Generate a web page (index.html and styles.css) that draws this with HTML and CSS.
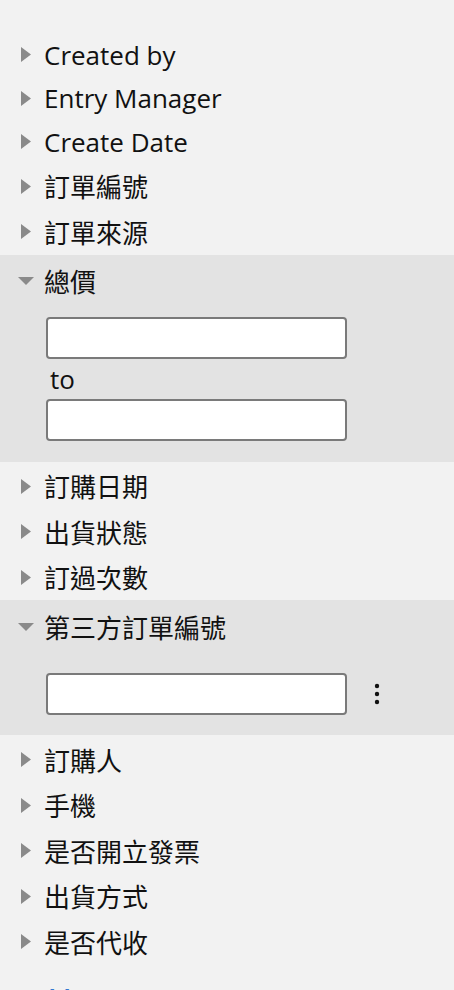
FILE: index.html
```html
<!DOCTYPE html>
<html lang="en">

<head>
    <meta charset="UTF-8">
    <meta name="viewport" content="width=device-width, initial-scale=1.0">
    <title>Filters</title>
    <link rel="stylesheet" href="styles.css">
</head>

<body>
    <div class="filters">
        <div class="row"><span class="marker"><svg class="arrow-right" width="10" height="15" viewBox="0 0 10 15"><path d="M0 0 L10 7.5 L0 15 Z" /></svg></span>Created by</div>
        <div class="row"><span class="marker"><svg class="arrow-right" width="10" height="15" viewBox="0 0 10 15"><path d="M0 0 L10 7.5 L0 15 Z" /></svg></span>Entry Manager</div>
        <div class="row"><span class="marker"><svg class="arrow-right" width="10" height="15" viewBox="0 0 10 15"><path d="M0 0 L10 7.5 L0 15 Z" /></svg></span>Create Date</div>
        <div class="row"><span class="marker"><svg class="arrow-right" width="10" height="15" viewBox="0 0 10 15"><path d="M0 0 L10 7.5 L0 15 Z" /></svg></span>訂單編號</div>
        <div class="row"><span class="marker"><svg class="arrow-right" width="10" height="15" viewBox="0 0 10 15"><path d="M0 0 L10 7.5 L0 15 Z" /></svg></span>訂單來源</div>

        <div class="group">
            <div class="row"><span class="marker open"><svg class="arrow-down" width="16" height="8" viewBox="0 0 16 8"><path d="M0 0 L16 0 L8 8 Z" /></svg></span>總價</div>
            <div class="range">
                <input class="field" type="text">
                <div class="to">to</div>
                <input class="field" type="text">
            </div>
        </div>

        <div class="row"><span class="marker"><svg class="arrow-right" width="10" height="15" viewBox="0 0 10 15"><path d="M0 0 L10 7.5 L0 15 Z" /></svg></span>訂購日期</div>
        <div class="row"><span class="marker"><svg class="arrow-right" width="10" height="15" viewBox="0 0 10 15"><path d="M0 0 L10 7.5 L0 15 Z" /></svg></span>出貨狀態</div>
        <div class="row"><span class="marker"><svg class="arrow-right" width="10" height="15" viewBox="0 0 10 15"><path d="M0 0 L10 7.5 L0 15 Z" /></svg></span>訂過次數</div>

        <div class="group">
            <div class="row"><span class="marker open"><svg class="arrow-down" width="16" height="8" viewBox="0 0 16 8"><path d="M0 0 L16 0 L8 8 Z" /></svg></span>第三方訂單編號</div>
            <div class="single">
                <input class="field" type="text">
                <svg class="kebab" width="6" height="22" viewBox="0 0 6 22">
                    <circle cx="3" cy="3" r="2.2" />
                    <circle cx="3" cy="11" r="2.2" />
                    <circle cx="3" cy="19" r="2.2" />
                </svg>
            </div>
        </div>

        <div class="row"><span class="marker"><svg class="arrow-right" width="10" height="15" viewBox="0 0 10 15"><path d="M0 0 L10 7.5 L0 15 Z" /></svg></span>訂購人</div>
        <div class="row"><span class="marker"><svg class="arrow-right" width="10" height="15" viewBox="0 0 10 15"><path d="M0 0 L10 7.5 L0 15 Z" /></svg></span>手機</div>
        <div class="row"><span class="marker"><svg class="arrow-right" width="10" height="15" viewBox="0 0 10 15"><path d="M0 0 L10 7.5 L0 15 Z" /></svg></span>是否開立發票</div>
        <div class="row"><span class="marker"><svg class="arrow-right" width="10" height="15" viewBox="0 0 10 15"><path d="M0 0 L10 7.5 L0 15 Z" /></svg></span>出貨方式</div>
        <div class="row"><span class="marker"><svg class="arrow-right" width="10" height="15" viewBox="0 0 10 15"><path d="M0 0 L10 7.5 L0 15 Z" /></svg></span>是否代收</div>

        <a class="more" href="#">More...</a>
    </div>
</body>

</html>
```

FILE: styles.css
```css
body {
    font-family: "Open Sans", "Noto Sans CJK TC", sans-serif;
    font-size: 26px;
    color: #111;
    background-color: #f2f2f2;
    margin: 0;
    padding: 0;
}

.filters {
    padding-top: 33px;
}

.row {
    display: flex;
    align-items: center;
    padding: 3.5px 0 4px 0;
}

.marker {
    width: 44px;
    padding-left: 21px;
    box-sizing: border-box;
    display: flex;
    align-items: center;
}

.marker.open {
    padding-left: 18px;
}

.marker svg {
    fill: #8a8a8a;
}

.group {
    background-color: #e3e3e3;
    padding: 4px 0 20.5px 0;
    margin-bottom: 2px;
}

.range {
    padding: 13px 0 0 46px;
}

.single {
    display: flex;
    align-items: center;
    padding: 23px 0 0 46px;
}

.field {
    display: block;
    width: 301px;
    height: 42px;
    box-sizing: border-box;
    border: 2px solid #7a7a7a;
    border-radius: 4px;
    background-color: #fff;
    margin: 0;
    font: inherit;
}

.to {
    padding: 2px 0 2px 4px;
}

.kebab {
    margin-left: 27px;
    fill: #111;
}

.more {
    display: block;
    margin: 14px 0 0 48px;
    color: #3478d0;
    text-decoration: none;
}
```
